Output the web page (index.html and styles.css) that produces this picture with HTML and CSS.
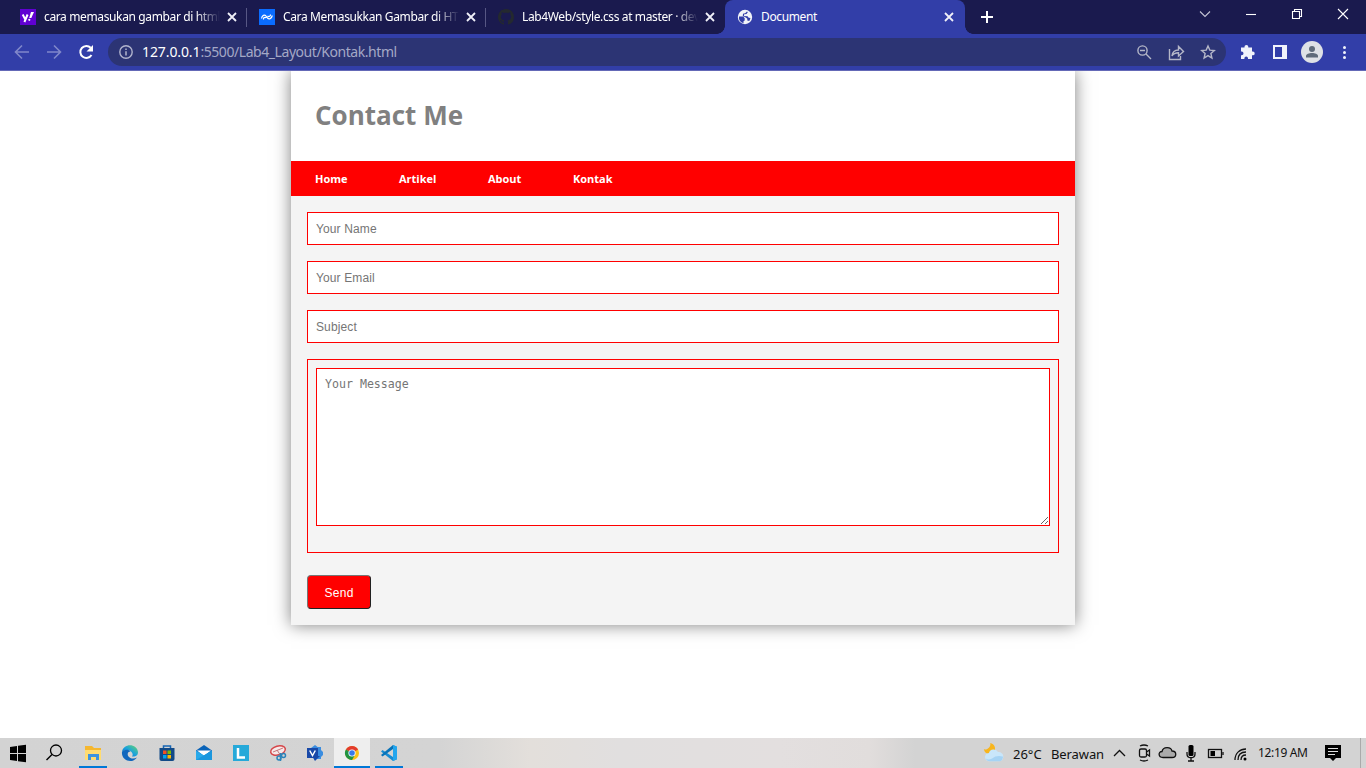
FILE: index.html
```html
<!DOCTYPE html>
<html lang="id">
<head>
<meta charset="utf-8">
<title>Document</title>
<link rel="stylesheet" href="styles.css">
</head>
<body>
<div class="screen">
  <div class="tabstrip">
    <div class="tab">
      <svg class="fav" viewBox="0 0 16 16"><rect width="16" height="16" fill="#6001d2"/><path d="M2.700 5.500l2.400 4.600M7.600 5.500L4.400 13" stroke="#fff" stroke-width="2" fill="none"/><path d="M11 3h3l-2.700 6H9.200z" fill="#fff"/><circle cx="9.300" cy="10.800" r="1.100" fill="#fff"/></svg>
      <span class="title">cara memasukan gambar di html</span>
      <svg class="close" viewBox="0 0 10 10"><path d="M1 1l8 8M9 1L1 9"/></svg>
    </div>
    <div class="tab">
      <svg class="fav" viewBox="0 0 16 16"><rect width="16" height="16" fill="#0a6cff"/><path d="M2.500 9.500C3 6.500 5.500 5 7 7l1.500 2c1.500 1.800 4 .8 4.800-2.500M4.500 10.500C4 9 6 7.500 7.200 9M8.500 7C10 8.500 11.500 7 11.500 5.500" stroke="#fff" stroke-width="1.200" fill="none"/></svg>
      <span class="title">Cara Memasukkan Gambar di HTM</span>
      <svg class="close" viewBox="0 0 10 10"><path d="M1 1l8 8M9 1L1 9"/></svg>
    </div>
    <div class="tab">
      <svg class="fav" viewBox="0 0 16 16"><path fill="#24292f" d="M8 0C3.580 0 0 3.580 0 8c0 3.540 2.290 6.530 5.470 7.590.4.070.55-.17.55-.38 0-.19-.01-.82-.01-1.490-2.010.37-2.530-.49-2.690-.94-.09-.23-.48-.94-.82-1.130-.28-.15-.68-.52-.01-.53.63-.01 1.080.58 1.230.82.72 1.210 1.870.87 2.330.66.07-.52.28-.87.51-1.070-1.780-.2-3.640-.89-3.640-3.950 0-.87.31-1.590.82-2.150-.08-.2-.36-1.020.08-2.120 0 0 .67-.21 2.200.82.64-.18 1.320-.27 2-.27s1.360.09 2 .27c1.530-1.040 2.200-.82 2.200-.82.44 1.100.16 1.920.08 2.120.51.56.82 1.270.82 2.150 0 3.070-1.870 3.750-3.650 3.950.29.25.54.73.54 1.480 0 1.070-.01 1.930-.01 2.200 0 .21.15.46.55.38A8 8 0 0 0 16 8c0-4.420-3.580-8-8-8z"/></svg>
      <span class="title">Lab4Web/style.css at master · dev</span>
      <svg class="close" viewBox="0 0 10 10"><path d="M1 1l8 8M9 1L1 9"/></svg>
    </div>
    <div class="tab active">
      <svg class="fav" viewBox="0 0 16 16"><circle cx="8" cy="8" r="7.200" fill="#f1f3f8"/><path d="M2 7.500h4.200l1.500 1.800v2.200l-1.200.8v2A6.300 6.300 0 0 1 2 7.500zM10 2.500l.8.800-1.300 1.600-2.300.4L7 7l3.500.2 1.200 1.600 1.800.2-1.200 3-2-.5V9.700L8.800 8.600 5.800 7l.2-2.200 2.200-.6z" fill="#323ea8"/></svg>
      <span class="title">Document</span>
      <svg class="close" viewBox="0 0 10 10"><path d="M1 1l8 8M9 1L1 9"/></svg>
    </div>
    <svg class="newtab" viewBox="0 0 12 12"><path d="M6 0v12M0 6h12" stroke="#fff" stroke-width="2"/></svg>
    <div class="winbtns">
      <svg viewBox="0 0 46 28"><path d="M18 11.500l5 5 5-5" class="ln dim"/></svg>
      <svg viewBox="0 0 46 28"><path d="M18 14.500h10" class="ln"/></svg>
      <svg viewBox="0 0 46 28"><path d="M18.500 11.500h7v7h-7zM20.500 11V9.500h7v7H26" class="ln"/></svg>
      <svg viewBox="0 0 46 28"><path d="M18 9l10 10M28 9L18 19" class="ln"/></svg>
    </div>
  </div>
  <div class="toolbar">
    <svg class="navbtns" viewBox="0 0 108 36"><g fill="none" stroke-width="1.600"><path d="M29 18H16M22 11.500L15.500 18l6.500 6.500M47 18h13M54 11.500l6.500 6.500-6.500 6.500" stroke="#8087ca"/><path d="M91.500 21a6 6 0 1 1-.8-7.200" stroke="#fff" stroke-width="2"/></g><path d="M93 11v6.500h-6.500z" fill="#fff"/></svg>
    <div class="omnibox">
      <svg class="info" viewBox="0 0 14 14"><circle cx="7" cy="7" r="6.200" fill="none" stroke="#b1b4cd" stroke-width="1.400"/><path d="M7 6.200v4.300M7 3.500v1.500" stroke="#b1b4cd" stroke-width="1.500"/></svg>
      <span class="url"><b>127.0.0.1</b>:5500/Lab4_Layout/Kontak.html</span>
      <svg class="omniicons" viewBox="0 0 96 28"><g fill="none" stroke="#b5b7c8" stroke-width="1.400"><circle cx="16.500" cy="12.500" r="4.600"/><path d="M14 12.500h5M20 16l5 5"/><path d="M43.500 11v10.500h11V18M46 18c.5-4.500 3.500-6 6.500-6V8.500l5 5-5 4.500v-3.200c-3 0-5 .7-6.500 3.200z"/><path d="M82 8l1.800 4.100 4.500.4-3.400 3 1 4.500-3.900-2.400-3.900 2.400 1-4.500-3.400-3 4.500-.4z"/></g></svg>
    </div>
    <svg class="toolicons" viewBox="0 0 140 36"><path d="M15 13.500h3.500v-.7a1.900 1.900 0 0 1 3.800 0v.7H26v4h.8a1.900 1.900 0 0 1 0 3.800H26V25h-4v-.8a1.800 1.800 0 0 0-3.600 0v.8H15v-3.800h.7a1.800 1.800 0 0 0 0-3.600H15z" fill="#f1f3fb"/><path d="M47 11h14v14H47zM49 13v10h7V13z" fill="#f1f3fb" fill-rule="evenodd"/><circle cx="86" cy="18" r="11" fill="#dee1e6"/><circle cx="86" cy="15" r="3" fill="#5f6b7a"/><path d="M80 23.500v-1.500c0-4 12-4 12 0v1.500z" fill="#5f6b7a"/><g fill="#f1f3fb"><circle cx="118.500" cy="13.500" r="1.500"/><circle cx="118.500" cy="18.500" r="1.500"/><circle cx="118.500" cy="23.500" r="1.500"/></g></svg>
  </div>
  <div class="viewport">
    <div class="container">
      <header class="head"><h1>Contact Me</h1></header>
      <nav class="nav"><a class="n1">Home</a><a class="n2">Artikel</a><a class="n3">About</a><a class="n4">Kontak</a></nav>
      <form class="form">
        <input class="field" placeholder="Your Name">
        <input class="field" placeholder="Your Email">
        <input class="field" placeholder="Subject">
        <div class="msgbox"><textarea class="msg" placeholder="Your Message"></textarea></div>
        <button class="send" type="button">Send</button>
      </form>
    </div>
  </div>
  <div class="taskbar">
    <div class="cell"><svg viewBox="0 0 36 30"><path d="M10 9l7-1v7h-7zM18 7.800L26 6.700V15h-8zM10 16h7v7l-7-1zM18 16h8v8.300l-8-1.100z" fill="#000"/></svg></div>
    <div class="cell search"><svg viewBox="0 0 36 30"><circle cx="20" cy="12.500" r="5.500" fill="none" stroke="#000" stroke-width="1.300"/><path d="M16 16.500L10.500 22" stroke="#000" stroke-width="1.500"/></svg></div>
    <div class="cell open"><svg viewBox="0 0 36 30"><path d="M10 8h7l2 2h7v12H10z" fill="#f5b72f"/><path d="M10 12h16v10H10z" fill="#ffdc71"/><path d="M13 22v-6h11v6h-3v-3h-5v3z" fill="#3c94df"/></svg></div>
    <div class="cell"><svg viewBox="0 0 36 30"><defs><linearGradient id="edge" x1="0" y1="1" x2="1" y2="0"><stop offset="0" stop-color="#0b61c5"/><stop offset=".5" stop-color="#1aa3dc"/><stop offset="1" stop-color="#68d66a"/></linearGradient></defs><path d="M10 14c1-9 15-9 16 0 0 4-3 5-6 4.500 1-1 1-3-.5-4.500-3-3-7-2-9.500 0z" fill="url(#edge)"/><path d="M10 14c2-3 7-3 8.500-.5-3 0-3.500 3-2 5s5 3 8.500 1c-5 7-16 3-15-5.500z" fill="#1267bd"/></svg></div>
    <div class="cell"><svg viewBox="0 0 36 30"><path d="M14.500 11V8h7v3" fill="none" stroke="#1665b5" stroke-width="1.500"/><path d="M10.500 10h15v11q0 2-2 2h-11q-2 0-2-2z" fill="#124a87"/><path d="M14 12.500h3.500V16H14z" fill="#f25022"/><path d="M18.500 12.500H22V16h-3.500z" fill="#7fba00"/><path d="M14 17h3.500v3.500H14z" fill="#00a4ef"/><path d="M18.500 17H22v3.500h-3.500z" fill="#ffb900"/></svg></div>
    <div class="cell"><svg viewBox="0 0 36 30"><path d="M10 12.500l8-5.500 8 5.500V22H10z" fill="#0a63b8"/><path d="M11 12.500h14L18 18z" fill="#fff"/><path d="M10 12.500l8 5 8-5V22H10z" fill="#28a9ea"/><path d="M10 22l16-9.500V22z" fill="#1a97de"/></svg></div>
    <div class="cell"><svg viewBox="0 0 36 30"><path d="M10 7h16v16H10z" fill="#26a9d9"/><path d="M15 10v9.500h7" fill="none" stroke="#fff" stroke-width="2.500"/></svg></div>
    <div class="cell"><svg viewBox="0 0 36 30"><ellipse cx="18" cy="12.500" rx="7.500" ry="4.500" transform="rotate(-15 18 12.500)" fill="#f7e9e9" stroke="#d54548" stroke-width="1.500"/><path d="M13 14l10-4M17 12l4 6" stroke="#c6767a"/><circle cx="19" cy="20" r="2" fill="none" stroke="#2b84bb" stroke-width="1.500"/><circle cx="23.500" cy="17.500" r="2" fill="none" stroke="#2b84bb" stroke-width="1.500"/><path d="M20.500 15v8" stroke="#2b84bb" stroke-width="1.500"/></svg></div>
    <div class="cell"><svg viewBox="0 0 36 30"><path d="M18 7l4 3-4 4-4-4zM21 9h3v3l2 2v3l-2 2v2h-4z" fill="#3a8de0"/><path d="M15 18h8l-5 5z" fill="#164bad"/><path d="M10 10h11v10H10z" fill="#1849a8"/><path d="M12.700 12.500l2.800 5 2.800-5" fill="none" stroke="#fff" stroke-width="1.500"/></svg></div>
    <div class="cell current"><svg viewBox="0 0 36 30"><circle cx="18" cy="15" r="7" fill="#fbc116"/><path d="M18 15L11.900 11.500A7 7 0 0 1 24.100 11.500z" fill="#e33b2e"/><path d="M11.900 11.500A7 7 0 0 0 18 22l3-5-3-2z" fill="#229342"/><circle cx="18" cy="15" r="3.600" fill="#fff"/><circle cx="18" cy="15" r="2.800" fill="#3879e8"/></svg></div>
    <div class="cell open"><svg viewBox="0 0 36 30"><path d="M22 7l4 1.800v12.400L22 23l-12-9.500 1.500-1.500L22 19z" fill="#168bd2"/><path d="M22 7L10 17l1.500 1.500L22 11z" fill="#0873b8"/><path d="M22 7l4 1.800v12.400L22 23z" fill="#23a6ee"/></svg></div>
    <div class="tray">
      <svg class="weather" viewBox="0 0 24 24"><path d="M9 1c1 4-3 8-7 7 1 6 9 7 12 1C15 5 13 2 9 1z" fill="#f8b51d"/><path d="M8 21a4.500 4.500 0 0 1-.5-9 5.500 5.500 0 0 1 10-1 5 5 0 0 1 1.500 10z" fill="#c9e6fa"/><path d="M8 21a4.500 4.500 0 0 1-4-3q3 2 7 0 5-4 12-2-1 5-4 5z" fill="#a6d3f4"/></svg>
      <span class="temp">26°C</span><span class="cond">Berawan</span>
      <svg class="trayicons" viewBox="0 0 144 30"><g fill="none" stroke="#111" stroke-width="1.300"><path d="M5 18l5.500-5.500L16 18"/><rect x="30.500" y="11" width="7" height="8" rx="1.500"/><path d="M37.500 14l3-2v6l-3-2M31 8q4-2 8 0M31 22q4 2 8 0"/><path d="M54 19.500c-5 0-5-6-1-6 1-5 9-5 10-.5 5 0 5 6.500 0 6.500z" fill="#aaa"/><path d="M78 14v2c0 5 8 5 8 0v-2M82 19v4M79 23h6"/><rect x="99.500" y="11.500" width="13" height="8"/><path d="M114 14v3"/><path d="M126 22c0-7 5-11 11-11M129 22c0-5 3-8 8-8M132 22c0-3 2-5 5-5"/></g><rect x="79.500" y="7" width="5" height="11" rx="1.500"/><path d="M101.500 13h4.500v5h-4.500z"/><circle cx="136" cy="21" r="1.500"/></svg>
      <span class="time">12:19 AM</span>
      <svg class="notif" viewBox="0 0 18 18"><path d="M1 1h16v13h-5l-3 3-3-3H1z" fill="#000"/><path d="M4 4.500h10M4 7.500h10M4 10.500h7" stroke="#ddd"/></svg>
    </div>
  </div>
</div>
</body>
</html>
```
FILE: styles.css
```css
* { box-sizing: border-box; }
body { margin: 0; background: #fff; font-family: "Noto Sans", "Open Sans", sans-serif; }
svg { display: block; flex: none; }
.screen { width: 1366px; height: 768px; display: flex; flex-direction: column; overflow: hidden; }

.tabstrip { height: 34px; background: #1a1a4e; display: flex; align-items: stretch; padding-left: 8px; }
.tab { position: relative; width: 239px; flex: none; display: flex; align-items: center; padding-left: 12px; color: #fff; }
.tab:nth-child(-n+2)::after { content: ""; position: absolute; right: 0; top: 8px; width: 1px; height: 19px; background: #575784; }
.tab.active { width: 240px; background: #323ea8; border-radius: 8px 8px 0 0; }
.tab.active::before, .tab.active::after { content: ""; position: absolute; bottom: 0; width: 8px; height: 8px; }
.tab.active::before { left: -8px; background: radial-gradient(circle at 0 0, transparent 7.5px, #323ea8 8px); }
.tab.active::after { right: -8px; background: radial-gradient(circle at 100% 0, transparent 7.5px, #323ea8 8px); }
.fav { width: 16px; height: 16px; }
.title { width: 179px; margin: 0 4px 0 8px; font-size: 12px; line-height: 18px; letter-spacing: -0.37px; white-space: nowrap; }
.tab:not(.active) .title { -webkit-mask-image: linear-gradient(90deg, #000 152px, transparent 176px); mask-image: linear-gradient(90deg, #000 152px, transparent 176px); }
.close { width: 10px; height: 10px; fill: none; stroke: #f0f0f8; stroke-width: 1.8; }
.newtab { width: 12px; height: 12px; margin: 11px 0 0 16px; }
.winbtns { display: flex; margin-left: auto; }
.winbtns svg { width: 46px; height: 28px; }
.ln { fill: none; stroke: #fff; stroke-width: 1.1; }
.dim { stroke: #c4c4d5; }

.toolbar { height: 37px; background: #323ea8; border-bottom: 1px solid #6469b7; display: flex; align-items: center; }
.navbtns { width: 108px; height: 36px; }
.omnibox { width: 1118px; height: 28px; border-radius: 14px; background: #2c3474; display: flex; align-items: center; padding: 0 4px 0 11px; }
.info { width: 14px; height: 14px; }
.url { margin-left: 9px; font-size: 14px; line-height: 20px; letter-spacing: -0.44px; color: #a4a8c6; white-space: nowrap; }
.url b { font-weight: 400; letter-spacing: -0.1px; color: #fff; }
.omniicons { width: 96px; height: 28px; margin-left: auto; }
.toolicons { width: 140px; height: 36px; }

.viewport { height: 667px; display: flex; justify-content: center; align-items: flex-start; overflow: hidden; background: #fff; }
.container { width: 784px; height: 554px; background: #f4f4f4; box-shadow: 0 0 16px rgba(0, 0, 0, .5); }
.head { height: 90px; background: #fff; padding: 26px 24px 0; }
.head h1 { margin: 0; font: 700 26px/37px "Open Sans", sans-serif; color: #808080; }
.nav { height: 35px; background: #f00; padding-left: 24px; display: flex; align-items: center; font: 700 11px/15px "Open Sans", sans-serif; color: #fff; }
.n1 { width: 84px; }
.n2 { width: 89px; }
.n3 { width: 85px; }
.form { padding: 16px; display: flex; flex-direction: column; align-items: flex-start; }
.field { width: 752px; height: 33px; margin: 0 0 16px; padding: 8px; border: 1px solid #f00; border-radius: 0; background: #fff; font: 12px/15px "Liberation Sans", Arial, sans-serif; letter-spacing: 0.12px; }
.msgbox { width: 752px; height: 194px; border: 1px solid #f00; padding: 8px; }
.msg { display: block; width: 734px; height: 158px; margin: 0; padding: 8px; border: 1px solid #f00; border-radius: 0; font: 11.6px/15px "DejaVu Sans Mono", "Liberation Mono", monospace; }
.field::placeholder, .msg::placeholder { color: #757575; }
.send { width: 64px; height: 34px; margin-top: 22px; padding: 2px 0 0; background: #f00; color: #fff; border: 1px solid; border-color: #767676 #212121 #212121 #767676; border-radius: 4px; font: 12px "Liberation Sans", Arial, sans-serif; letter-spacing: 0.3px; }

.taskbar { height: 30px; display: flex; background: linear-gradient(90deg, #d3d3d3 0, #d4d4d4 440px, #e3dfdb 530px, #e1dfdf 620px, #e3dfdf 780px, #e1dddc 870px, #d3d3d3 915px, #d3d3d3 100%); }
.cell { width: 36px; height: 30px; margin-right: 1px; flex: none; }
.cell svg { width: 36px; height: 30px; }
.cell:first-child { margin-right: 0; }
.search { margin-right: 3px; }
.current { background: #eee; border-bottom: 2px solid #0078d7; }
.open { background: linear-gradient(#0078d7, #0078d7) center bottom / 28px 2px no-repeat; }
.tray { width: 384px; margin-left: auto; padding-bottom: 1px; display: flex; align-items: center; border-right: 5px solid transparent; background: linear-gradient(#aaa, #aaa) right top / 1px 100% no-repeat; font-size: 13px; line-height: 18px; color: #111; white-space: nowrap; }
.weather { width: 22px; height: 22px; }
.temp { width: 38px; margin-left: 9px; padding-top: 2px; }
.cond { width: 58px; padding-top: 2px; letter-spacing: -0.1px; }
.trayicons { width: 144px; height: 30px; }
.time { width: 66px; margin-left: 5px; font-size: 12px; letter-spacing: -0.35px; }
.notif { width: 18px; height: 18px; margin-right: 18px; }
```
